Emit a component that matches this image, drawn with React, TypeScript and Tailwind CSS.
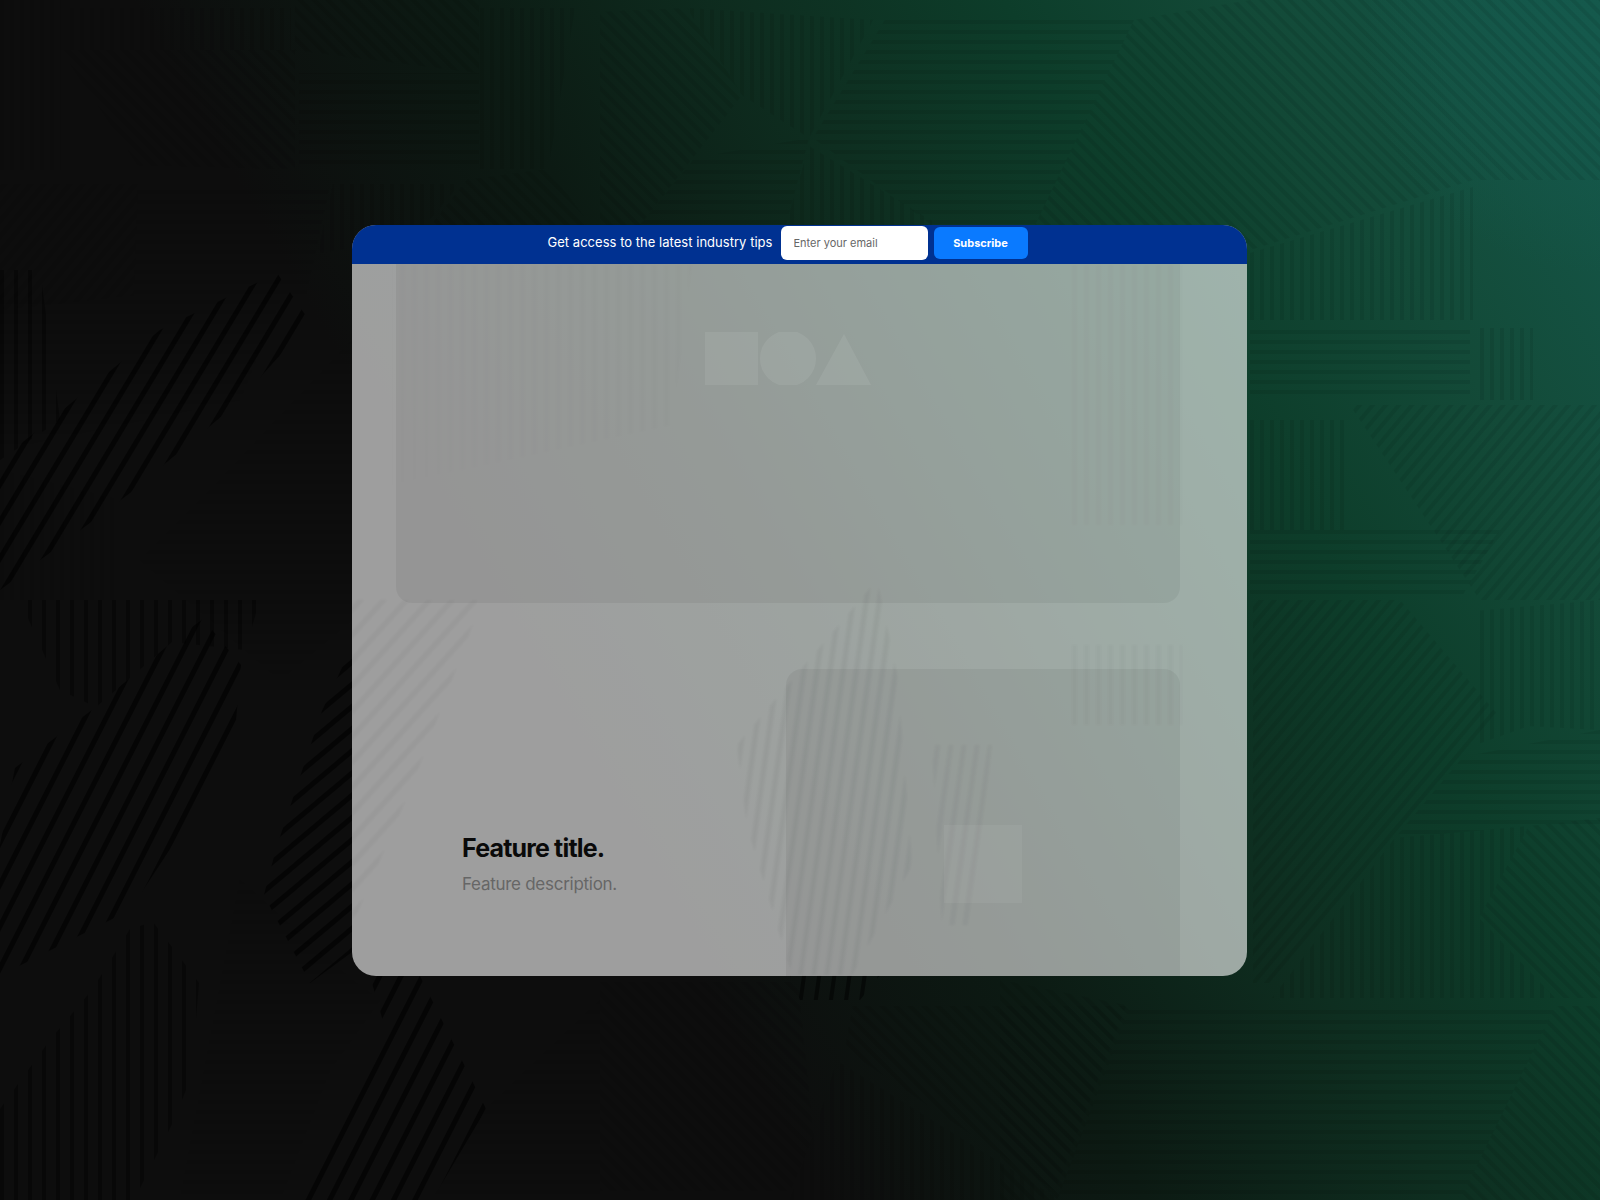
// App.tsx
import React from 'react';

type Region = { p: string; pts: string; o?: number };

// faint hatch patches that make up the backdrop
const faintRegions: Region[] = [
  { p: 'h', pts: '138,184 330,184 306,295 134,295' },
  { p: 'h', pts: '299,73 479,73 479,169 299,169' },
  { p: 'd2', pts: '61,50 295,50 295,169 138,165' },
  { p: 'd1', pts: '0,184 138,184 134,295 0,310' },
  { p: 'v', pts: '0,0 61,0 61,170 0,170' },
  { p: 'v', pts: '69,8 291,8 291,50 69,50' },
  { p: 'v', pts: '333,184 460,184 414,238 318,253' },
  { p: 'v', pts: '479,8 575,8 548,169 479,169' },
  { p: 'd2', pts: '295,0 479,0 479,73 295,50' },
  { p: 'd2', pts: '467,180 548,169 600,238 421,238' },
  { p: 'h', pts: '885,20 1134,20 1035,225 932,225 813,138' },
  { p: 'h', pts: '695,158 809,138 786,225 640,225' },
  { p: 'v', pts: '687,8 873,20 809,138 742,95' },
  { p: 'd2', pts: '600,12 687,8 742,95 640,225 600,225' },
  { p: 'v', pts: '809,146 932,221 932,225 786,225' },
  { p: 'd2', pts: '1134,20 1250,0 1250,250 1035,225' },
  { p: 'v', pts: '1250,253 1473,187 1473,320 1250,320' },
  { p: 'v', pts: '1477,328 1533,328 1533,400 1477,400' },
  { p: 'd2', pts: '1250,0 1600,0 1600,180 1473,180 1250,250' },
  { p: 'h', pts: '1250,325 1470,325 1470,400 1250,400' },
  { p: 'v', pts: '1250,420 1350,420 1350,530 1250,530' },
  { p: 'h', pts: '1250,530 1500,530 1460,600 1250,600' },
  { p: 'd1', pts: '1350,405 1600,405 1600,600 1480,600' },
  { p: 'd1', pts: '1253,600 1400,600 1498,715 1460,761 1272,983 1253,983' },
  { p: 'h', pts: '1463,757 1600,730 1600,826 1529,826 1395,838' },
  { p: 'v', pts: '1475,611 1600,600 1600,730 1529,726 1475,745' },
  { p: 'v', pts: '1395,838 1529,826 1479,918 1555,998 1272,998' },
  { p: 'd2', pts: '1529,826 1600,818 1600,998 1555,998 1479,918' },
  { p: 'h', pts: '1130,1006 1555,1006 1460,1200 1057,1200' },
  { p: 'd2', pts: '1000,980 1130,1006 1057,1200 1000,1200' },
  { p: 'd2', pts: '1555,1006 1600,1006 1600,1200 1460,1200' },
  { p: 'd2', pts: '600,982 798,982 813,1136 790,1191 600,1191' },
  { p: 'v', pts: '837,1061 1060,1200 790,1200 813,1136' },
  { p: 'd2', pts: '853,1006 1126,1006 1055,1191 845,1049' },
  { p: 'h', pts: '600,1195 699,1195 699,1200 600,1200' },
  { p: 'h', pts: '0,300 280,300 240,400 0,450' },
  { p: 'h', pts: '220,480 352,340 352,620 280,680 140,560' },
  { p: 'v', pts: '0,470 120,500 120,600 0,600' },
  { p: 'h', pts: '240,880 352,980 380,1000 330,1070 280,1200 180,1200' },
  { p: 'h', pts: '486,1109 600,1000 600,1200 432,1200' },
];

// the darker stripe bands on the left of the picture
const strongRegions: Region[] = [
  { p: 's1', pts: '277,273 310,322 235,405 130,493 0,590 0,460 47,423 160,330' },
  { p: 's2', pts: '203,619 241,665 233,753 130,910 23,964 0,975 0,845 15,768 96,707 172,642' },
  { p: 's3', pts: '352,646 322,711 276,849 264,895 310,983 352,952' },
  { p: 's2', pts: '370,976 420,976 486,1109 432,1200 302,1200 383,1021' },
  { p: 'sv', pts: '153,922 199,983 191,1078 172,1124 134,1200 0,1200 0,1109 50,1040 92,990 130,929', o: 0.35 },
  { p: 'sv', pts: '0,270 40,270 60,420 0,460', o: 0.35 },
  { p: 'sv', pts: '20,600 260,600 245,650 172,642 96,707 60,690', o: 0.35 },
  { p: 's4', pts: '790,975 880,975 860,1000 800,1000', o: 0.5 },
];

function Backdrop() {
  return (
    <svg className="absolute inset-0 w-full h-full blur-[0.7px]" viewBox="0 0 1600 1200">
      <defs>
        <pattern id="v" width="10" height="10" patternUnits="userSpaceOnUse">
          <rect width="4" height="10" fill="#000" />
        </pattern>
        <pattern id="h" width="10" height="10" patternUnits="userSpaceOnUse">
          <rect width="10" height="4" fill="#000" />
        </pattern>
        <pattern id="d1" width="10" height="10" patternUnits="userSpaceOnUse" patternTransform="rotate(40)">
          <rect width="4" height="10" fill="#000" />
        </pattern>
        <pattern id="d2" width="10" height="10" patternUnits="userSpaceOnUse" patternTransform="rotate(-45)">
          <rect width="4" height="10" fill="#000" />
        </pattern>
        <pattern id="s1" width="19" height="19" patternUnits="userSpaceOnUse" patternTransform="rotate(31)">
          <rect width="5" height="19" fill="#000" />
        </pattern>
        <pattern id="s2" width="19" height="19" patternUnits="userSpaceOnUse" patternTransform="rotate(27)">
          <rect width="5" height="19" fill="#000" />
        </pattern>
        <pattern id="s3" width="17" height="17" patternUnits="userSpaceOnUse" patternTransform="rotate(50)">
          <rect width="5" height="17" fill="#000" />
        </pattern>
        <pattern id="s4" width="15" height="15" patternUnits="userSpaceOnUse" patternTransform="rotate(8)">
          <rect width="4" height="15" fill="#000" />
        </pattern>
        <pattern id="sv" width="14" height="14" patternUnits="userSpaceOnUse">
          <rect width="4" height="14" fill="#000" />
        </pattern>
      </defs>
      {faintRegions.map((r, i) => (
        <polygon key={i} points={r.pts} fill={`url(#${r.p})`} opacity={0.07} />
      ))}
      {strongRegions.map((r, i) => (
        <polygon key={i} points={r.pts} fill={`url(#${r.p})`} opacity={r.o ?? 0.6} />
      ))}
    </svg>
  );
}

// stripes that show through the frosted card
function CardGhost() {
  return (
    <svg className="absolute inset-0 w-full h-full blur-[1px]" viewBox="0 0 895 751">
      <defs>
        <pattern id="g1" width="17" height="17" patternUnits="userSpaceOnUse" patternTransform="rotate(42)">
          <rect width="5" height="17" fill="#000" />
        </pattern>
        <pattern id="g2" width="13" height="13" patternUnits="userSpaceOnUse" patternTransform="rotate(8)">
          <rect width="5" height="13" fill="#000" />
        </pattern>
        <pattern id="g3" width="12" height="12" patternUnits="userSpaceOnUse">
          <rect width="5" height="12" fill="#000" />
        </pattern>
      </defs>
      <polygon points="0,375 130,375 60,560 0,700" fill="url(#g1)" opacity="0.03" />
      <polygon points="525,355 545,450 560,640 500,750 440,750 395,600 385,520 470,420" fill="url(#g2)" opacity="0.04" />
      <polygon points="40,40 340,40 320,200 40,260" fill="url(#g3)" opacity="0.008" />
      <polygon points="720,40 830,40 830,300 720,300" fill="url(#g3)" opacity="0.01" />
      <polygon points="720,420 830,420 830,500 720,500" fill="url(#g3)" opacity="0.02" />
      <polygon points="580,520 640,520 620,700 590,700" fill="url(#g2)" opacity="0.03" />
    </svg>
  );
}

export default function App() {
  return (
    <div className="relative w-full h-[1200px] overflow-hidden flex items-center justify-center bg-[radial-gradient(circle_at_100%_3%,#15594c_0%,transparent_12%),linear-gradient(60deg,#0d0d0d_36%,#0c1a13_50%,#0e2e20_63%,#0d3d2a_74%,#134a38_85%,#15594c_100%)] font-['Inter',sans-serif]">
      <Backdrop />

      <div className="relative mr-px w-[895px] h-[751px] rounded-3xl overflow-hidden bg-white/60 flex flex-col">
        <CardGhost />

        {/* top banner */}
        <div className="relative h-[39px] shrink-0 bg-[#003191] flex items-center justify-center gap-2 pr-[24px] pb-[2px]">
          <span className="text-[13px] tracking-[0.03px] text-white">Get access to the latest industry tips</span>
          <input
            placeholder="Enter your email"
            className="w-[147px] h-[34px] px-[13px] bg-white rounded-md text-[11px] text-[#666] placeholder:text-[#666] outline-none"
          />
          <button className="ml-[-2px] w-[94px] h-[32px] bg-[#0a7aff] rounded-md text-[11px] font-bold text-white">Subscribe</button>
        </div>

        {/* first media panel */}
        <div className="relative ml-[44px] w-[784px] h-[339px] shrink-0 rounded-b-2xl bg-black/5 flex justify-center pt-[68px]">
          <svg width="166" height="53" viewBox="0 0 166 53" className="opacity-[0.07]">
            <rect x="0" y="0" width="53" height="53" fill="#fff" />
            <circle cx="83" cy="26.5" r="28" fill="#fff" />
            <polygon points="139,2 166,53 111,53" fill="#fff" />
          </svg>
        </div>

        {/* feature row */}
        <div className="relative flex mt-[66px] flex-1 min-h-0">
          <div className="w-[434px] pl-[110px] pb-[78px] flex flex-col justify-end">
            <h3 className="text-[25px] leading-8 font-bold tracking-[-0.033em] text-[#0a0a0a]">Feature title.</h3>
            <p className="mt-[6px] text-[17px] leading-7 tracking-[-0.016em] text-[#666]">Feature description.</p>
          </div>
          <div className="w-[394px] rounded-t-2xl bg-black/5 flex justify-center pt-[156px]">
            <div className="w-[78px] h-[78px] bg-white/5" />
          </div>
        </div>
      </div>
    </div>
  );
}
